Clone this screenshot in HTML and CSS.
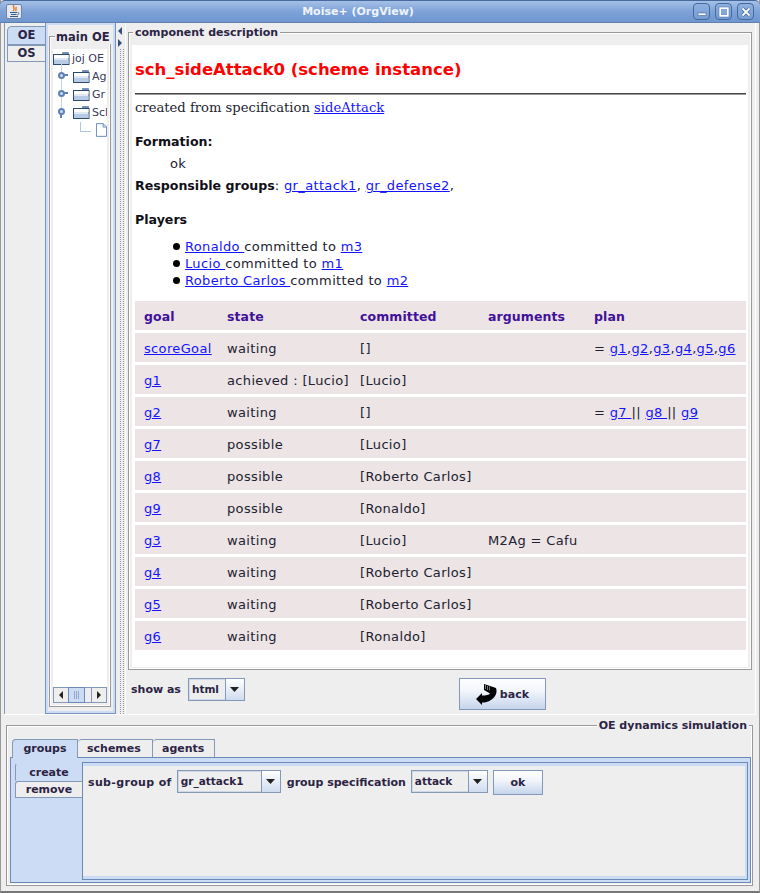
FILE: index.html
```html
<!DOCTYPE html>
<html lang="en">
<head>
  <meta charset="UTF-8" />
  <title>Moise+ (OrgView)</title>
  <link rel="stylesheet" href="styles.css">
</head>
<body>
  <svg class="defs" width="0" height="0">
    <symbol id="folder" viewBox="0 0 17 13">
      <path d="M9.500 .5h6v2h-6z" fill="#6b8cb8" stroke="#51729e" stroke-width=".6"/>
      <rect x=".5" y="2.500" width="15.500" height="10" fill="#dfe8f5" stroke="#2f4a72"/>
      <rect x="1" y="3" width="14.500" height="3" fill="#fff"/>
      <rect x="1" y="8" width="14.500" height="4" fill="#b8cbe6"/>
    </symbol>
    <symbol id="arrow" viewBox="0 0 9 5"><path d="M0 0h9L4.500 5z" fill="#222"/></symbol>
  </svg>

  <div class="window">
    <header class="titlebar">
      <span class="java-btn">
        <svg width="14" height="13" viewBox="0 0 14 13"><path d="M7 0C5 2 9 3 6 6M9.500 2C8 3.500 10 4 8.500 6" stroke="#e8701f" stroke-width="1.300" fill="none"/><path d="M3 7.500h7M4 9.500h5.500M3 11.500h8" stroke="#34598a" stroke-width="1"/><path d="M10.500 7.500c2 0 2 2-.5 2.500" stroke="#34598a" stroke-width=".8" fill="none"/></svg>
      </span>
      <span class="title">Moise+ (OrgView)</span>
      <div class="win-btns">
        <span class="win-btn"><svg width="12" height="12" viewBox="0 0 12 12"><rect x="2" y="7" width="8" height="2.500" fill="#fff" stroke="#3f659c" stroke-width=".6"/></svg></span>
        <span class="win-btn"><svg width="12" height="12" viewBox="0 0 12 12"><rect x="2" y="2" width="8" height="8" fill="none" stroke="#fff" stroke-width="2"/><rect x="1" y="1" width="10" height="10" fill="none" stroke="#3f659c" stroke-width=".5"/></svg></span>
        <span class="win-btn"><svg width="12" height="12" viewBox="0 0 12 12"><path d="M2.500 2.500l7 7M9.500 2.500l-7 7" stroke="#3f659c" stroke-width="3.200"/><path d="M2.500 2.500l7 7M9.500 2.500l-7 7" stroke="#fff" stroke-width="1.800"/></svg></span>
      </div>
    </header>

    <div class="workspace">
      <nav class="side-tabs">
        <div class="side-tab active">OE</div>
        <div class="side-tab">OS</div>
      </nav>

      <aside class="tree-pane">
        <div class="titled tree-box">
          <span class="legend">main OE</span>
          <div class="tree">
            <div class="node root"><svg class="folder"><use href="#folder"/></svg>joj OE</div>
            <div class="node"><i class="handle"></i><svg class="folder"><use href="#folder"/></svg>Ag</div>
            <div class="node"><i class="handle"></i><svg class="folder"><use href="#folder"/></svg>Gr</div>
            <div class="node"><i class="handle open"></i><svg class="folder"><use href="#folder"/></svg>Scl</div>
            <div class="node leaf"><i class="elbow"></i>
              <svg width="13" height="16" viewBox="0 0 13 16"><path d="M.5.500h8l4 4v11H.500z" fill="#fff" stroke="#4d7ab4"/><path d="M8.500.500v4h4" fill="none" stroke="#4d7ab4"/></svg>
            </div>
          </div>
          <div class="hscroll">
            <span class="sb-btn"><b class="tri-left"></b></span>
            <span class="sb-thumb"></span>
            <span class="sb-track"></span>
            <span class="sb-btn"><b class="tri-right"></b></span>
          </div>
        </div>
      </aside>

      <div class="splitter">
        <b class="tri-left small"></b>
        <b class="tri-right small"></b>
        <div class="grip"></div>
      </div>

      <main class="detail">
        <div class="titled doc-box">
          <span class="legend">component description</span>
          <article class="doc">
            <h1>sch_sideAttack0 (scheme instance)</h1>
            <hr>
            <p class="created">created from specification <a href="#">sideAttack</a></p>
            <h3 class="formation">Formation:</h3>
            <p class="ok">ok</p>
            <p class="groups"><strong>Responsible groups</strong>: <a href="#">gr_attack1</a>, <a href="#">gr_defense2</a>,</p>
            <h3 class="players">Players</h3>
            <ul>
              <li><a href="#">Ronaldo </a> committed to <a href="#">m3 </a></li>
              <li><a href="#">Lucio </a> committed to <a href="#">m1 </a></li>
              <li><a href="#">Roberto Carlos </a> committed to <a href="#">m2 </a></li>
            </ul>
            <table>
              <tr><th>goal</th><th>state</th><th>committed</th><th>arguments</th><th>plan</th></tr>
              <tr><td><a href="#">scoreGoal</a></td><td>waiting</td><td>[]</td><td></td><td>= <a href="#">g1</a>,<a href="#">g2</a>,<a href="#">g3</a>,<a href="#">g4</a>,<a href="#">g5</a>,<a href="#">g6</a></td></tr>
              <tr><td><a href="#">g1</a></td><td>achieved : [Lucio]</td><td>[Lucio]</td><td></td><td></td></tr>
              <tr><td><a href="#">g2</a></td><td>waiting</td><td>[]</td><td></td><td>= <a href="#">g7 </a> || <a href="#">g8 </a> || <a href="#">g9</a></td></tr>
              <tr><td><a href="#">g7</a></td><td>possible</td><td>[Lucio]</td><td></td><td></td></tr>
              <tr><td><a href="#">g8</a></td><td>possible</td><td>[Roberto Carlos]</td><td></td><td></td></tr>
              <tr><td><a href="#">g9</a></td><td>possible</td><td>[Ronaldo]</td><td></td><td></td></tr>
              <tr><td><a href="#">g3</a></td><td>waiting</td><td>[Lucio]</td><td>M2Ag = Cafu</td><td></td></tr>
              <tr><td><a href="#">g4</a></td><td>waiting</td><td>[Roberto Carlos]</td><td></td><td></td></tr>
              <tr><td><a href="#">g5</a></td><td>waiting</td><td>[Roberto Carlos]</td><td></td><td></td></tr>
              <tr><td><a href="#">g6</a></td><td>waiting</td><td>[Ronaldo]</td><td></td><td></td></tr>
            </table>
          </article>
        </div>
        <div class="doc-controls">
          <div class="show-as">
            <span>show as</span>
            <span class="combo combo-html"><span class="combo-value">html</span><span class="combo-arrow"><svg width="9" height="5"><use href="#arrow"/></svg></span></span>
          </div>
          <button class="btn back-btn">
            <svg width="21" height="21" viewBox="0 0 21 21"><path d="M0 15L6 9V11.500C10 11.500 13 11 14 9.500L8 6V0L20 4C21.500 8 20 13 15 16C12 18 9 18.500 6 18.500V21Z" fill="#000"/><path d="M9 1h1v4H9zM11 2h1v4h-1zM13 2.500h1v4h-1z" fill="#777"/></svg>
            back
          </button>
        </div>
      </main>
    </div>

    <section class="titled dynamics">
      <span class="legend legend-right">OE dynamics simulation</span>
      <div class="top-tabs">
        <div class="top-tab active">groups</div>
        <div class="top-tab">schemes</div>
        <div class="top-tab">agents</div>
      </div>
      <div class="tab-body">
        <div class="sub-tabs">
          <div class="sub-tab active">create</div>
          <div class="sub-tab">remove</div>
        </div>
        <div class="form-panel">
          <span class="sub-group-label">sub-group of</span>
          <span class="combo combo-group"><span class="combo-value">gr_attack1</span><span class="combo-arrow"><svg width="9" height="5"><use href="#arrow"/></svg></span></span>
          <span class="spec-label">group specification</span>
          <span class="combo combo-spec"><span class="combo-value">attack</span><span class="combo-arrow"><svg width="9" height="5"><use href="#arrow"/></svg></span></span>
          <button class="btn ok-btn">ok</button>
        </div>
      </div>
    </section>
  </div>
</body>
</html>
```

FILE: styles.css
```css
* {
  box-sizing: border-box;
}
html, body {
  margin: 0;
  height: 100%;
  overflow: hidden;
}
body {
  font-family: "DejaVu Sans", sans-serif;
  font-size: 11px;
  color: #2c2444;
  background: #eeeeee;
}
.defs {
  position: absolute;
}
.window {
  width: 760px;
  height: 893px;
  display: flex;
  flex-direction: column;
  background: #eeeeee;
  border-bottom: 2px solid #777;
  border-right: 1px solid #999;
  border-left: 1px solid #999;
}

/* title bar */
.titlebar {
  height: 23px;
  margin: 0 -1px;
  padding: 0 6px;
  display: flex;
  align-items: center;
  position: relative;
  background: linear-gradient(#a4c0e6, #7ea2d8 50%, #6f96d0);
  border-top: 1px solid #48699b;
  border-radius: 5px 5px 0 0;
  border-bottom: 1px solid #5f7fae;
}
.java-btn {
  width: 16px;
  height: 15px;
  display: flex;
  align-items: center;
  justify-content: center;
  background: #e4e8ee;
  border: 1px solid #6d85a8;
  border-radius: 2px;
}
.title {
  flex: 1;
  text-align: center;
  color: #f0f4fb;
  font-weight: bold;
  font-size: 11px;
  padding-left: 22px;
  padding-right: 21px;
}
.win-btns {
  display: flex;
  gap: 5px;
}
.win-btn {
  width: 17px;
  height: 17px;
  display: flex;
  align-items: center;
  justify-content: center;
  background: linear-gradient(#8fb0e0, #779cd4);
  border: 1px solid #456a9e;
  border-radius: 4px;
}

/* upper part */
.workspace {
  height: 692px;
  display: flex;
  border-bottom: 1px solid #fff;
  border-right: 1px solid #fff;
  margin: 0 3px 0 3px;
}
.side-tabs {
  width: 41px;
  padding: 3px 0 0 2px;
  border-left: 1px solid #8498b8;
}
.side-tab {
  height: 17px;
  text-align: center;
  font-weight: bold;
  font-size: 11.500px;
  border: 1px solid #8498b8;
  border-right: 0;
  line-height: 15px;
}
.side-tab.active {
  background: #ccdcf4;
  border-radius: 5px 0 0 0;
  height: 19px;
  line-height: 17px;
}
.tree-pane {
  width: 71px;
  border: 1px solid #7a93bc;
  border-top-width: 0;
  background: #eeeeee;
  box-shadow: inset 0 0 0 2px #ccdcf4;
  padding: 13px 4px 6px 3px;
}
.titled {
  position: relative;
  border: 1px solid #999;
  box-shadow: inset 0 0 0 1px #fff;
}
.legend {
  position: absolute;
  top: -7px;
  left: 4px;
  padding: 0 2px;
  background: #eeeeee;
  font-weight: bold;
  font-size: 11px;
  line-height: 14px;
  white-space: nowrap;
}
.tree-box {
  height: 100%;
  padding: 12px 3px 3px;
  display: flex;
  flex-direction: column;
}
.tree-box .legend {
  font-size: 11.500px;
  left: 5px;
  padding: 0 1px;
}
.tree {
  flex: 1;
  background: #fff;
  overflow: hidden;
  font-size: 11px;
  color: #3a3a5a;
}
.node {
  height: 18px;
  display: flex;
  align-items: center;
  padding-left: 20px;
  white-space: nowrap;
  position: relative;
}
.node.root {
  padding-left: 0;
}
.folder {
  width: 17px;
  height: 13px;
  margin-right: 2px;
  flex: none;
  position: relative;
}
.node:not(.root):not(.leaf)::before {
  content: "";
  position: absolute;
  left: 8px;
  top: -4px;
  width: 1px;
  height: 18px;
  background: #c2d3ea;
}
.handle {
  position: absolute;
  left: 5px;
  top: 5px;
  width: 7px;
  height: 7px;
  border: 2px solid #5f82b6;
  border-radius: 50%;
  background: #cddcf2;
}
.handle::after {
  content: "";
  position: absolute;
  left: 4px;
  top: 0;
  width: 4px;
  height: 2px;
  background: #5f82b6;
}
.handle.open::after {
  left: 0;
  top: 4px;
  width: 2px;
  height: 4px;
}
.elbow {
  position: absolute;
  left: 27px;
  top: 1px;
  width: 11px;
  height: 10px;
  border-left: 1px solid #b0c6e2;
  border-bottom: 1px solid #b0c6e2;
}
.node.leaf {
  padding-left: 43px;
  overflow: hidden;
}
.hscroll {
  height: 16px;
  display: flex;
  background: #eeeeee;
  border: 1px solid #8498b8;
}
.sb-btn {
  width: 14px;
  display: flex;
  align-items: center;
  justify-content: center;
}
.sb-thumb {
  width: 17px;
  display: flex;
  align-items: center;
  justify-content: center;
  background: #ccdcf4;
  border: 1px solid #6c8ab8;
  margin: -1px 0;
}
.sb-thumb::before {
  content: "";
  width: 5px;
  height: 8px;
  background: repeating-linear-gradient(90deg, #8fa8cc 0 1px, #ccdcf4 1px 2px);
}
.sb-track {
  flex: 1;
  border-right: 1px solid #8498b8;
}
.tri-left, .tri-right {
  width: 0;
  height: 0;
  display: block;
  flex: none;
  border-top: 4px solid transparent;
  border-bottom: 4px solid transparent;
}
.tri-left {
  border-right: 4px solid #222;
}
.tri-right {
  border-left: 4px solid #222;
}
.splitter {
  width: 9px;
  padding: 4px 0 0 2px;
  display: flex;
  flex-direction: column;
}
.tri-left.small {
  border-right-color: #34507c;
  margin-bottom: 4px;
}
.tri-right.small {
  border-left-color: #34507c;
  margin-bottom: 2px;
}
.grip {
  flex: 1;
  width: 4px;
  margin-left: 2px;
  border-left: 1px dotted #999;
  border-right: 1px dotted #999;
}
.detail {
  flex: 1;
  border-left: 1px solid #fff;
  padding: 9px 0 0 2px;
  display: flex;
  flex-direction: column;
}
.doc-box {
  height: 638px;
  padding: 12px 3px 2px;
  width: 624px;
}
.doc {
  height: 100%;
  background: #fff;
  padding: 0 3px;
  overflow: hidden;
  color: #222230;
  font-size: 13px;
  letter-spacing: .35px;
}
.doc a {
  color: #1414ff;
}
.doc h1 {
  margin: 0;
  padding-top: 15px;
  height: 48px;
  font-size: 16.500px;
  line-height: 20px;
  color: #ff0000;
  letter-spacing: 0;
}
.doc hr {
  margin: 0;
  width: 611px;
  height: 2px;
  border: 0;
  border-top: 1px solid #444;
  border-bottom: 1px solid #999;
}
.doc p, .doc h3 {
  margin: 0;
}
.created {
  font-family: "DejaVu Serif", serif;
  font-size: 13.150px;
  line-height: 16px;
  padding-top: 5px;
  letter-spacing: 0;
}
.doc h3 {
  font-size: 12.600px;
  color: #101018;
  line-height: 16px;
  letter-spacing: 0;
}
.formation {
  padding-top: 18px;
}
.ok {
  padding: 6px 0 0 35px;
  line-height: 16px;
}
.groups {
  line-height: 16px;
  padding-top: 6px;
}
.groups strong {
  color: #101018;
  font-size: 12.600px;
  letter-spacing: 0;
}
.players {
  padding-top: 18px;
}
.doc ul {
  list-style: none;
  margin: 0;
  padding: 10px 0 0 37px;
}
.doc li {
  line-height: 17px;
  white-space: nowrap;
  position: relative;
  padding-left: 13px;
}
.doc li::before {
  content: "";
  position: absolute;
  left: 1px;
  top: 5px;
  width: 7px;
  height: 7px;
  border-radius: 50%;
  background: #000;
}
.doc table {
  margin-top: 9px;
  width: 611px;
  border-collapse: separate;
  border-spacing: 0 3px;
  table-layout: fixed;
  background: #fff;
}
.doc th, .doc td {
  background: #ece4e5;
  height: 29px;
  padding: 1px 0 0 9px;
  text-align: left;
  white-space: nowrap;
  font-weight: normal;
}
.doc th {
  font-weight: bold;
  font-size: 12.500px;
  letter-spacing: .1px;
  color: #42109a;
}
.doc th:nth-child(1) { width: 83px; }
.doc th:nth-child(2) { width: 133px; }
.doc th:nth-child(3) { width: 128px; }
.doc th:nth-child(4) { width: 106px; }

/* controls under the document */
.doc-controls {
  flex: 1;
  display: flex;
  align-items: flex-start;
  padding: 8px 0 0 3px;
}
.show-as {
  display: flex;
  align-items: center;
  gap: 7px;
  font-weight: bold;
}
.combo {
  height: 23px;
  display: flex;
  border: 1px solid #8498b8;
  font-weight: bold;
  font-size: 10.500px;
}
.combo-value {
  flex: 1;
  padding: 0 2px;
  line-height: 19px;
  border: 1px solid #cfd8e6;
  border-right: 0;
  background: #eeeeee;
}
.combo-arrow {
  width: 19px;
  display: flex;
  align-items: center;
  justify-content: center;
  background: linear-gradient(#fff, #cfdcef);
  border-left: 1px solid #8498b8;
}
.combo-html { width: 57px; }
.combo-group { width: 104px; }
.combo-spec { width: 77px; }
.btn {
  font: bold 11px "DejaVu Sans", sans-serif;
  color: #2c2444;
  background: linear-gradient(#fff, #f2f5fb 40%, #c5d5ec);
  border: 1px solid #8498b8;
  padding: 0;
}
.back-btn {
  width: 87px;
  height: 32px;
  margin-left: 214px;
  display: flex;
  align-items: center;
  justify-content: center;
  gap: 3px;
}

/* bottom part */
.dynamics {
  margin: 10px 6px 5px 5px;
  flex: 1;
  padding: 13px 1px 2px 3px;
  display: flex;
  flex-direction: column;
}
.legend-right {
  left: auto;
  right: 3px;
}
.top-tabs {
  display: flex;
  padding-left: 2px;
  position: relative;
}
.top-tab {
  height: 18px;
  padding: 0 9px;
  font-weight: bold;
  line-height: 17px;
  border: 1px solid #8498b8;
  border-bottom: 0;
  border-left: 0;
  border-radius: 4px 0 0 0;
}
.top-tab:nth-child(1) { width: 66px; border-left: 1px solid #8498b8; text-align: center; }
.top-tab:nth-child(2) { width: 75px; }
.top-tab:nth-child(3) { width: 62px; }
.top-tab.active {
  background: #ccdcf4;
  margin-bottom: -1px;
  height: 19px;
  position: relative;
}
.tab-body {
  flex: 1;
  display: flex;
  border: 1px solid #6c8ab8;
  background: #ccdcf4;
  padding: 4px 2px 2px 0;
}
.sub-tabs {
  width: 71px;
  padding: 1px 0 0 4px;
  flex: none;
}
.sub-tab {
  height: 17px;
  text-align: center;
  font-weight: bold;
  line-height: 15px;
  background: #eeeeee;
  border: 1px solid #8498b8;
  border-right: 0;
  border-radius: 3px 0 0 0;
}
.sub-tab.active {
  height: 18px;
  line-height: 17px;
  background: #ccdcf4;
  border-color: #ccdcf4;
  border-left-color: #8498b8;
}
.form-panel {
  flex: 1;
  background: #eeeeee;
  border: 1px solid #6c8ab8;
  box-shadow: inset 0 3px #ccdcf4, inset 0 -3px #ccdcf4, inset -2px 0 #ccdcf4;
  padding: 7px 5px;
  display: flex;
  align-items: flex-start;
  gap: 5px;
  font-weight: bold;
  line-height: 25px;
}
.sub-group-label {
  letter-spacing: .35px;
}
.spec-label {
  margin-left: 1px;
}
.ok-btn {
  width: 50px;
  height: 25px;
}
```
